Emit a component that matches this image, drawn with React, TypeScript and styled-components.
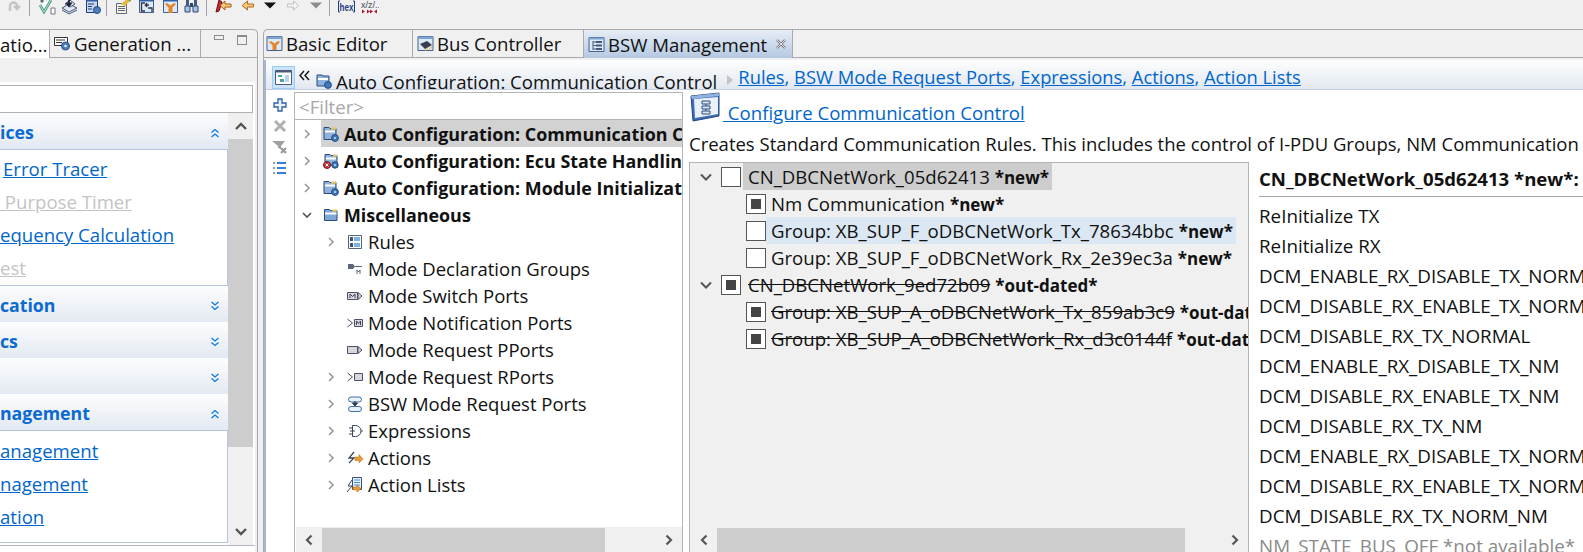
import React from 'react'
import styled, { createGlobalStyle } from 'styled-components'

const GlobalStyle = createGlobalStyle`
  html, body { margin: 0; padding: 0; background: #f0f0f0; }
  * { box-sizing: border-box; }
`

const Page = styled.div`
  width: 1583px;
  height: 552px;
  overflow: hidden;
  display: flex;
  flex-direction: column;
  background: #f0f0f0;
  font-family: 'Open Sans', 'Noto Sans', sans-serif;
  font-size: 18.6px;
  color: #111;
`

/* ---------- toolbar ---------- */
const Toolbar = styled.div`
  height: 29px;
  flex: none;
  display: flex;
  align-items: flex-start;
  overflow: hidden;
`
const ToolIcon = styled.svg<{ $ml?: number }>`
  flex: none;
  margin-top: -2px;
  margin-left: ${({ $ml }) => $ml ?? 6}px;
`
const ToolSep = styled.div<{ $ml: number }>`
  width: 1px;
  height: 16px;
  flex: none;
  margin-left: ${({ $ml }) => $ml}px;
  background: #a0a0a0;
`
const HexText = styled.text`
  font-family: 'Liberation Sans', sans-serif;
  font-size: 11px;
  font-weight: 700;
  fill: #1f3f86;
`
const XzText = styled.text`
  font-family: 'Liberation Sans', sans-serif;
  font-size: 9px;
  fill: #445;
`

/* ---------- panes ---------- */
const Work = styled.div`
  flex: 1;
  display: flex;
  min-height: 0;
`
const LeftPane = styled.div`
  width: 258px;
  flex: none;
  display: flex;
  flex-direction: column;
  border-top: 1px solid #a9a9a9;
  border-right: 1px solid #a9a9a9;
  border-top-right-radius: 5px;
`
const RightPane = styled.div`
  flex: 1;
  margin-left: 5px;
  min-width: 0;
  display: flex;
  flex-direction: column;
  border-top: 1px solid #a9a9a9;
  border-left: 1px solid #a9a9a9;
  border-top-left-radius: 5px;
`
const TabBar = styled.div`
  height: 28px;
  flex: none;
  display: flex;
  border-bottom: 1px solid #a9a9a9;
`
const Tab = styled.div<{ $w: number; $pad?: number; $active?: boolean; $selected?: boolean }>`
  width: ${({ $w }) => $w}px;
  flex: none;
  display: flex;
  align-items: center;
  gap: 3px;
  padding-left: ${({ $pad }) => $pad ?? 4}px;
  height: ${({ $active }) => ($active ? 28 : 27)}px;
  white-space: nowrap;
  overflow: hidden;
  border-right: 1px solid #a9a9a9;
  background: ${({ $active, $selected }) =>
    $selected ? 'linear-gradient(#e6edf6, #b4c9e2)' : $active ? '#fff' : 'transparent'};
`
const TabSpacer = styled.div`
  flex: 1;
`
const PaneButtons = styled.div`
  width: 56px;
  flex: none;
  display: flex;
  align-items: flex-start;
  gap: 13px;
  padding: 5px 0 0 13px;
`
const MinBtn = styled.div`
  width: 10px;
  height: 5px;
  border: 1px solid #8c8c8c;
`
const MaxBtn = styled.div`
  width: 10px;
  height: 10px;
  border: 1px solid #8c8c8c;
  border-top-width: 2px;
`
const CloseMark = styled.svg`
  flex: none;
  margin-left: 5px;
`

/* ---------- left pane ---------- */
const LeftGap = styled.div`
  height: 24px;
  flex: none;
`
const LeftBody = styled.div`
  flex: 1;
  min-height: 0;
  background: #fff;
  margin-right: 2px;
  padding: 3px 0 0;
  display: flex;
  flex-direction: column;
`
const SearchBox = styled.div`
  height: 28px;
  flex: none;
  margin-right: 2px;
  border: 1px solid #b0b0b0;
  border-left: none;
  background: #fff;
`
const LeftColumns = styled.div`
  flex: 1;
  min-height: 0;
  display: flex;
  margin-right: 2px;
`
const Sections = styled.div`
  flex: 1;
  min-width: 0;
  overflow: hidden;
`
const SectionHead = styled.div`
  height: 36px;
  display: flex;
  align-items: center;
  justify-content: space-between;
  padding: 3px 0 0 0;
  background: linear-gradient(#fcfdfe, #e3e9f2);
  color: #0a6ad0;
  font-size: 17.7px;
  font-weight: 700;
  line-height: 1;
`
const Fold = styled.svg`
  margin-right: 8px;
  flex: none;
`
const SectionBody = styled.div<{ $h: number; $pt: number }>`
  height: ${({ $h }) => $h}px;
  border: 1px solid #b7c5da;
  border-left: none;
  background: #fff;
  padding-top: ${({ $pt }) => $pt}px;
`
const SideLink = styled.div<{ $off?: boolean; $ml?: number }>`
  height: 33px;
  padding-left: ${({ $ml }) => $ml ?? 0}px;
  line-height: 33px;
  white-space: pre;
  color: ${({ $off }) => ($off ? '#c4c4c4' : '#0066cc')};
  text-decoration: underline;
`
const VScroll = styled.div`
  width: 25px;
  flex: none;
  display: flex;
  flex-direction: column;
  background: #f0f0f0;
`
const ScrollEnd = styled.div<{ $h: number }>`
  height: ${({ $h }) => $h}px;
  flex: none;
  display: flex;
  align-items: center;
  justify-content: center;
`
const VThumb = styled.div<{ $h: number }>`
  height: ${({ $h }) => $h}px;
  flex: none;
  background: #cdcdcd;
`
const VFill = styled.div`
  flex: 1;
`
const LeftFoot = styled.div`
  height: 7px;
  flex: none;
  border-top: 1px solid #b0b8c4;
`

/* ---------- editor ---------- */
const Editor = styled.div`
  flex: 1;
  min-height: 0;
  margin-top: 2px;
  display: flex;
  flex-direction: column;
  border-left: 2px solid #a3b7d3;
  background: #fff;
`
const FormHead = styled.div`
  height: 30px;
  flex: none;
  display: flex;
  align-items: flex-start;
  overflow: hidden;
  white-space: nowrap;
  border-bottom: 1px solid #c3cfe0;
  background: linear-gradient(#fdfefe, #e2e8f1);
`
const HeadButton = styled.div`
  width: 23px;
  height: 23px;
  flex: none;
  margin: 6px 0 0 6px;
  display: flex;
  align-items: center;
  justify-content: center;
  background: #cbe3f9;
  border: 1px solid #9ccbf3;
`
const HeadBack = styled.svg`
  flex: none;
  margin: 10px 0 0 4px;
`
const HeadIcon = styled.svg`
  flex: none;
  margin: 13px 0 0 6px;
`
const HeadTitle = styled.div`
  margin: 8px 0 0 4px;
  line-height: 28px;
`
const HeadArrow = styled.svg`
  flex: none;
  margin: 15px 0 0 10px;
`
const HeadLinks = styled.div`
  margin: 5px 0 0 5px;
  font-size: 18.35px;
  line-height: 24px;
  color: #0066cc;
`
const HeadLink = styled.span`
  text-decoration: underline;
`
const EditorBody = styled.div`
  flex: 1;
  min-height: 0;
  display: flex;
  padding-top: 2px;
`
const ActionRail = styled.div`
  width: 28px;
  flex: none;
  display: flex;
  flex-direction: column;
  align-items: center;
  gap: 7px;
  padding-top: 6px;
`
const TreePane = styled.div`
  width: 389px;
  flex: none;
  display: flex;
  flex-direction: column;
  border: 1px solid #b4b4b4;
  border-bottom: none;
`
const FilterRow = styled.div`
  height: 27px;
  flex: none;
  padding-left: 4px;
  line-height: 28px;
  color: #a8a8a8;
  border-bottom: 1px solid #b4b4b4;
`
const TreeList = styled.div`
  flex: 1;
  min-height: 0;
  overflow: hidden;
`
const TreeRow = styled.div<{ $level: number }>`
  height: 27px;
  display: flex;
  align-items: center;
  white-space: nowrap;
  padding-left: ${({ $level }) => ($level ? 29 : 5)}px;
`
const Twistie = styled.svg`
  width: 14px;
  height: 14px;
  flex: none;
`
const TwistieGap = styled.div`
  width: 14px;
  height: 14px;
  flex: none;
`
const RowBody = styled.div<{ $level: number; $selected?: boolean }>`
  flex: 1;
  min-width: 0;
  height: 27px;
  display: flex;
  align-items: center;
  gap: 5px;
  overflow: hidden;
  margin-left: 7px;
  padding-left: 2px;
  font-size: ${({ $level }) => ($level ? 18.5 : 17.9)}px;
  font-weight: ${({ $level }) => ($level ? 400 : 700)};
  background: ${({ $selected }) => ($selected ? '#d2d2d2' : 'transparent')};
`
const HScroll = styled.div`
  height: 25px;
  flex: none;
  display: flex;
  align-items: center;
  margin-left: 1px;
  background: #f0f0f0;
`
const HEnd = styled.div`
  width: 26px;
  flex: none;
  display: flex;
  justify-content: center;
`
const HThumb = styled.div<{ $w: number }>`
  width: ${({ $w }) => $w}px;
  height: 24px;
  flex: none;
  background: #cdcdcd;
`
const HFill = styled.div`
  flex: 1;
`

const Details = styled.div`
  flex: 1;
  min-width: 0;
  display: flex;
  flex-direction: column;
  overflow: hidden;
  padding: 0 0 0 6px;
`
const ConfigHead = styled.div`
  height: 30px;
  flex: none;
  display: flex;
  align-items: flex-start;
  gap: 2px;
`
const ConfigLink = styled.div`
  margin-top: 8px;
  line-height: 26px;
  color: #0066cc;
  text-decoration: underline;
  white-space: pre;
`
const Description = styled.div`
  height: 40px;
  flex: none;
  padding-top: 9px;
  font-size: 18.5px;
  line-height: 26px;
  white-space: nowrap;
`
const Split = styled.div`
  flex: 1;
  min-height: 0;
  display: flex;
`
const CheckPane = styled.div`
  width: 560px;
  flex: none;
  display: flex;
  flex-direction: column;
  background: #f0f0f0;
  border: 1px solid #b4b4b4;
  border-bottom: none;
`
const CheckList = styled.div`
  flex: 1;
  min-height: 0;
  overflow: hidden;
`
const CheckRow = styled.div<{ $level: number }>`
  height: 27px;
  display: flex;
  align-items: center;
  white-space: nowrap;
  padding-left: ${({ $level }) => ($level ? 56 : 9)}px;
`
const CheckTwistie = styled(Twistie)`
  margin-right: 8px;
`
const CheckBox = styled.div<{ $on?: boolean }>`
  width: 20px;
  height: 20px;
  flex: none;
  border: 1px solid #555;
  background: #fff;
  display: flex;
  align-items: center;
  justify-content: center;
  &::after {
    content: '';
    display: ${({ $on }) => ($on ? 'block' : 'none')};
    width: 10px;
    height: 10px;
    background: #444;
  }
`
const CheckLabel = styled.div<{ $level: number; $tint?: 'grey' | 'blue' }>`
  height: 27px;
  min-width: 0;
  overflow: hidden;
  margin-left: ${({ $level }) => ($level ? 0 : 2)}px;
  line-height: 27px;
  padding: 0 3px 0 5px;
  background: ${({ $tint }) => ($tint === 'grey' ? '#cdcdcd' : $tint === 'blue' ? '#dbe7f3' : 'transparent')};
`
const Struck = styled.span<{ $gone?: boolean }>`
  text-decoration: ${({ $gone }) => ($gone ? 'line-through' : 'none')};
`
const Bold = styled.span`
  font-size: 17px;
  font-weight: 700;
`
const ModePane = styled.div`
  flex: 1;
  min-width: 0;
  padding-left: 10px;
  white-space: nowrap;
  overflow: hidden;
`
const ModeTitle = styled.div`
  height: 35px;
  margin-bottom: 4px;
  line-height: 34px;
  font-weight: 700;
  border-bottom: 1px solid #a9a9a9;
`
const ModeRow = styled.div<{ $off?: boolean }>`
  height: 30px;
  font-size: 18.8px;
  line-height: 30px;
  color: ${({ $off }) => ($off ? '#8a8a8a' : '#111')};
`

/* ---------- icons ---------- */
const FolderGear = () => (
  <svg width="16" height="16" viewBox="0 0 16 16" style={{ flex: 'none' }}>
    <path d="M1 1.500h5l1 1h6v11H1z" fill="#8fb2dc" stroke="#2d4a7c" />
    <path d="M2 4.500h10v2H2z" fill="#fff" />
    <path d="M8 1.500h5v2H8z" fill="#e8c35a" />
    <circle cx="12" cy="12" r="3.400" fill="#3f78b8" stroke="#204a80" />
    <circle cx="12" cy="12" r="1" fill="#cfe0f2" />
  </svg>
)
const FolderError = () => (
  <svg width="16" height="16" viewBox="0 0 16 16" style={{ flex: 'none' }}>
    <path d="M2 1.500h5l1 1h6v10H2z" fill="#8fb2dc" stroke="#2d4a7c" />
    <path d="M3 4.500h10v2H3z" fill="#fff" />
    <path d="M10 1.500h4v2h-4z" fill="#e8c35a" />
    <circle cx="4" cy="12" r="3.500" fill="#c8323c" stroke="#7c1a22" />
    <path d="M2.600 10.600l2.800 2.800M5.400 10.600l-2.800 2.800" stroke="#fff" />
    <circle cx="12" cy="12" r="3.200" fill="#3f78b8" stroke="#204a80" />
    <circle cx="12" cy="12" r="1" fill="#cfe0f2" />
  </svg>
)
const Folder = () => (
  <svg width="16" height="16" viewBox="0 0 16 16" style={{ flex: 'none' }}>
    <path d="M1.500 2.500h5l1 1h6.500v10h-12.500z" fill="#7ea6d6" stroke="#2d4a7c" />
    <path d="M2 5.500h11.500v2H2z" fill="#fff" />
    <path d="M9 2.500h5v2H9z" fill="#e8c35a" />
  </svg>
)
const RulesIcon = () => (
  <svg width="16" height="16" viewBox="0 0 16 16" style={{ flex: 'none' }}>
    <path d="M1.500 1.500h13v13h-13z" fill="#fff" stroke="#54627c" />
    <path d="M7 3h6v4H7zM7 9h6v4H7z" fill="#7db3e2" />
    <path d="M3 3h3v4H3zM3 9h3v4H3z" fill="#44536e" />
  </svg>
)
const ModeGroupIcon = () => (
  <svg width="16" height="16" viewBox="0 0 16 16" style={{ flex: 'none' }}>
    <path d="M1 3h5l2 2.500L6 8H1z" fill="#5c6579" />
    <path d="M8 5.500h7" stroke="#5c6579" />
    <path d="M10 13V9l1.500 2L13 9v4" fill="none" stroke="#5c6579" />
  </svg>
)
const SwitchPortIcon = () => (
  <svg width="16" height="16" viewBox="0 0 16 16" style={{ flex: 'none' }}>
    <path d="M.5 4.500h10v7H.5z" fill="#d8d8dc" stroke="#4a5268" />
    <path d="M3 10V6l2.500 2.500L8 6v4" fill="none" stroke="#3c4458" />
    <path d="M11 4.500l4 3.500-4 3.500z" fill="#d8d8dc" stroke="#4a5268" />
  </svg>
)
const NotifyPortIcon = () => (
  <svg width="16" height="16" viewBox="0 0 16 16" style={{ flex: 'none' }}>
    <path d="M.5 4l5 4-5 4" fill="none" stroke="#4a5268" />
    <path d="M7.500 4.500h8v7h-8z" fill="#d8d8dc" stroke="#4a5268" />
    <path d="M9.500 10V6l2 2.500 2-2.500v4" fill="none" stroke="#3c4458" />
  </svg>
)
const PPortIcon = () => (
  <svg width="16" height="16" viewBox="0 0 16 16" style={{ flex: 'none' }}>
    <path d="M.5 4.500h10v7H.5z" fill="#d8d8dc" stroke="#4a5268" />
    <path d="M11 4.500l4 3.500-4 3.500z" fill="#d8d8dc" stroke="#4a5268" />
  </svg>
)
const RPortIcon = () => (
  <svg width="16" height="16" viewBox="0 0 16 16" style={{ flex: 'none' }}>
    <path d="M.5 4l5 4-5 4" fill="none" stroke="#4a5268" />
    <path d="M7.500 4.500h8v7h-8z" fill="#d8d8dc" stroke="#4a5268" />
  </svg>
)
const BswPortIcon = () => (
  <svg width="16" height="16" viewBox="0 0 16 16" style={{ flex: 'none' }}>
    <rect x="1.500" y="1" width="13" height="5" rx="2.500" fill="#e8f0fa" stroke="#3f6fa8" />
    <rect x="1.500" y="10.500" width="13" height="5" rx="2.500" fill="#e8f0fa" stroke="#3f6fa8" />
    <path d="M8 5v2M5.500 7h5L8 10z" fill="#2d3a55" stroke="#2d3a55" />
  </svg>
)
const ExpressionIcon = () => (
  <svg width="16" height="16" viewBox="0 0 16 16" style={{ flex: 'none' }}>
    <path d="M5.500 2.500h3a5.500 5.500 0 0 1 0 11h-3z" fill="#fff" stroke="#3a4560" />
    <path d="M2 5h3.500M2 11h3.500M14 8h2M3 8h5" stroke="#3a4560" />
  </svg>
)
const ActionIcon = () => (
  <svg width="16" height="16" viewBox="0 0 16 16" style={{ flex: 'none' }}>
    <path d="M7 2L2 8h5l-5 5" fill="none" stroke="#3a4560" strokeWidth="1.300" />
    <path d="M8 7h4V4.500L16 9l-4 4v-2.500H8z" fill="#ef9a2c" stroke="#a8641a" strokeWidth=".5" />
  </svg>
)
const ActionListIcon = () => (
  <svg width="16" height="18" viewBox="0 0 16 18" style={{ flex: 'none' }}>
    <path d="M5.500 1.500h9v12h-9z" fill="#eaf2fb" stroke="#3a4f78" />
    <path d="M7 4h6M7 6.500h6M7 9h6" stroke="#3f8fdc" />
    <path d="M5 4L1 10h4l-5 6" fill="none" stroke="#3a4560" />
    <path d="M6 11h4V9l4 3.500-4 3.500v-2H6z" fill="#ef9a2c" stroke="#a8641a" strokeWidth=".5" />
  </svg>
)
const DocTabIcon = () => (
  <svg width="17" height="17" viewBox="0 0 17 17" style={{ flex: 'none' }}>
    <path d="M1 1.500h15v14H1z" fill="#dce9f7" stroke="#44618e" />
    <path d="M1 1.500h15v2.500H1z" fill="#7fa4d4" />
    <path d="M3 7l2-1 3.500 2.500L12 6l2 1-3.500 3.500V15h-4v-4.500z" fill="#e6842a" />
  </svg>
)
const ChipIcon = () => (
  <svg width="17" height="17" viewBox="0 0 17 17" style={{ flex: 'none' }}>
    <path d="M1 1.500h15v14H1z" fill="#dce9f7" stroke="#44618e" />
    <path d="M1 1.500h15v2.500H1z" fill="#7fa4d4" />
    <path d="M3 9l7-3 5 4-7 4z" fill="#3a3f4e" />
    <path d="M8 15h1M10 14.500h1M12 13.500h1M14 12.500h1" stroke="#e8b82c" strokeWidth="1.500" />
  </svg>
)
const BswIcon = () => (
  <svg width="17" height="17" viewBox="0 0 17 17" style={{ flex: 'none' }}>
    <path d="M1 1.500h15v14H1z" fill="#dce9f7" stroke="#44618e" />
    <path d="M1 1.500h15v2H1z" fill="#7fa4d4" />
    <path d="M8 5h6v2H8zM8 8.500h6v2H8zM8 12h6v2H8z" fill="#46597e" />
    <path d="M5 5v9M5 6h3M5 9.500h3M5 13h3" fill="none" stroke="#46597e" />
  </svg>
)
const GenIcon = () => (
  <svg width="17" height="15" viewBox="0 0 17 15" style={{ flex: 'none' }}>
    <path d="M.5 1.500h13v8H.5z" fill="#fff" stroke="#333" />
    <path d="M2 4h9M2 6.500h6" stroke="#333" />
    <circle cx="11.500" cy="10" r="4" fill="#4d7fbe" stroke="#264d84" />
    <circle cx="11.500" cy="10" r="1.300" fill="#dfeaf6" />
  </svg>
)
const LeftChevron = () => (
  <svg width="10" height="12" viewBox="0 0 10 12">
    <path d="M7.500 1.500L3 6l4.500 4.500" fill="none" stroke="#555" strokeWidth="2.200" />
  </svg>
)
const RightChevron = () => (
  <svg width="10" height="12" viewBox="0 0 10 12">
    <path d="M2.500 1.500L7 6l-4.500 4.500" fill="none" stroke="#555" strokeWidth="2.200" />
  </svg>
)
const UpChevron = () => (
  <svg width="14" height="10" viewBox="0 0 14 10">
    <path d="M2 8l5-5 5 5" fill="none" stroke="#555" strokeWidth="2.400" />
  </svg>
)
const DownChevron = () => (
  <svg width="14" height="10" viewBox="0 0 14 10">
    <path d="M2 2l5 5 5-5" fill="none" stroke="#555" strokeWidth="2.400" />
  </svg>
)
const FoldDown = () => (
  <Fold width="10" height="10" viewBox="0 0 10 10">
    <path d="M1.500 1l3.500 3 3.500-3M1.500 5.500l3.500 3 3.500-3" fill="none" stroke="#0a78e0" strokeWidth="1.300" />
  </Fold>
)
const FoldUp = () => (
  <Fold width="10" height="10" viewBox="0 0 10 10">
    <path d="M1.500 4.500l3.500-3 3.500 3M1.500 9l3.500-3 3.500 3" fill="none" stroke="#0a78e0" strokeWidth="1.300" />
  </Fold>
)
const Closed = () => (
  <Twistie viewBox="0 0 14 14">
    <path d="M5 3l4 4-4 4" fill="none" stroke="#9b9b9b" strokeWidth="1.700" />
  </Twistie>
)
const Open = () => (
  <Twistie viewBox="0 0 14 14">
    <path d="M3 5l4 4 4-4" fill="none" stroke="#555" strokeWidth="1.700" />
  </Twistie>
)
const CheckTwistieOpen = () => (
  <CheckTwistie viewBox="0 0 14 14">
    <path d="M2 4.500l5 5 5-5" fill="none" stroke="#555" strokeWidth="2" />
  </CheckTwistie>
)

/* ---------- data ---------- */
const treeRows = [
  { level: 0, label: 'Auto Configuration: Communication Control', icon: <FolderGear />, state: 'closed', selected: true },
  { level: 0, label: 'Auto Configuration: Ecu State Handling', icon: <FolderError />, state: 'closed' },
  { level: 0, label: 'Auto Configuration: Module Initialization', icon: <FolderGear />, state: 'closed' },
  { level: 0, label: 'Miscellaneous', icon: <Folder />, state: 'open' },
  { level: 1, label: 'Rules', icon: <RulesIcon />, state: 'closed' },
  { level: 1, label: 'Mode Declaration Groups', icon: <ModeGroupIcon /> },
  { level: 1, label: 'Mode Switch Ports', icon: <SwitchPortIcon /> },
  { level: 1, label: 'Mode Notification Ports', icon: <NotifyPortIcon /> },
  { level: 1, label: 'Mode Request PPorts', icon: <PPortIcon /> },
  { level: 1, label: 'Mode Request RPorts', icon: <RPortIcon />, state: 'closed' },
  { level: 1, label: 'BSW Mode Request Ports', icon: <BswPortIcon />, state: 'closed' },
  { level: 1, label: 'Expressions', icon: <ExpressionIcon />, state: 'closed' },
  { level: 1, label: 'Actions', icon: <ActionIcon />, state: 'closed' },
  { level: 1, label: 'Action Lists', icon: <ActionListIcon />, state: 'closed' },
]

const checkRows = [
  { level: 0, name: 'CN_DBCNetWork_05d62413', tag: '*new*', on: false, tint: 'grey' as const },
  { level: 1, name: 'Nm Communication', tag: '*new*', on: true },
  { level: 1, name: 'Group: XB_SUP_F_oDBCNetWork_Tx_78634bbc', tag: '*new*', on: false, tint: 'blue' as const },
  { level: 1, name: 'Group: XB_SUP_F_oDBCNetWork_Rx_2e39ec3a', tag: '*new*', on: false },
  { level: 0, name: 'CN_DBCNetWork_9ed72b09', tag: '*out-dated*', on: true, gone: true },
  { level: 1, name: 'Group: XB_SUP_A_oDBCNetWork_Tx_859ab3c9', tag: '*out-dated*', on: true, gone: true },
  { level: 1, name: 'Group: XB_SUP_A_oDBCNetWork_Rx_d3c0144f', tag: '*out-dated*', on: true, gone: true },
]

const modes = [
  'ReInitialize TX',
  'ReInitialize RX',
  'DCM_ENABLE_RX_DISABLE_TX_NORM',
  'DCM_DISABLE_RX_ENABLE_TX_NORM',
  'DCM_DISABLE_RX_TX_NORMAL',
  'DCM_ENABLE_RX_DISABLE_TX_NM',
  'DCM_DISABLE_RX_ENABLE_TX_NM',
  'DCM_DISABLE_RX_TX_NM',
  'DCM_ENABLE_RX_DISABLE_TX_NORM',
  'DCM_DISABLE_RX_ENABLE_TX_NORM',
  'DCM_DISABLE_RX_TX_NORM_NM',
]

const headLinks = ['Rules', 'BSW Mode Request Ports', 'Expressions', 'Actions', 'Action Lists']

function ToolbarStrip() {
  return (
    <Toolbar>
      <ToolIcon $ml={8} width="13" height="17" viewBox="0 0 13 17">
        <path d="M2 13V8a3.500 3.500 0 0 1 7 0v2M6 8l3 3 3-3" fill="none" stroke="#c4c4c4" strokeWidth="2.400" />
      </ToolIcon>
      <ToolSep $ml={8} />
      <ToolIcon $ml={8} width="18" height="17" viewBox="0 0 18 17">
        <path d="M2 7l4 7 7-12" fill="#fff" stroke="#3f9a78" strokeWidth="2.600" />
        <path d="M2 7l4 7 7-12" fill="none" stroke="#dff2ea" strokeWidth=".8" />
        <path d="M13 10h4v6h-4z" fill="#fff" stroke="#778" />
        <path d="M2 3l2-2 2 2-2 2z" fill="#667" />
      </ToolIcon>
      <ToolIcon $ml={5} width="17" height="17" viewBox="0 0 17 17">
        <path d="M1 10l7-4 8 4-8 4zM1 12l7 4 8-4" fill="#dfe6f0" stroke="#46597e" />
        <path d="M4 6l5-4 5 4-5 3z" fill="#dfe6f0" stroke="#46597e" />
        <path d="M8 0v7M5.500 4.500L8 8l2.500-3.500" fill="none" stroke="#223" strokeWidth="1.800" />
      </ToolIcon>
      <ToolIcon $ml={7} width="17" height="17" viewBox="0 0 17 17">
        <path d="M1.500 1.500h11v13h-11z" fill="#c8d8ec" stroke="#1f3f78" />
        <path d="M1.500 1.500h11v2h-11z" fill="#2f5fa8" />
        <path d="M3 6h6M3 8.500h4M3 11h4" stroke="#1f3f78" />
        <circle cx="12" cy="12" r="3.500" fill="#4d7fbe" stroke="#264d84" />
      </ToolIcon>
      <ToolSep $ml={4} />
      <ToolIcon $ml={8} width="17" height="17" viewBox="0 0 17 17">
        <path d="M1.500 5.500h10v10h-10z" fill="#f6f2e0" stroke="#5d6a84" />
        <path d="M3 8.500h7M3 10.500h7M3 12.500h7" stroke="#5d6a84" />
        <path d="M6 6l6-5 4 1-6 6z" fill="#e6b840" />
        <path d="M13 1l3 1-1 2z" fill="#3f9a58" />
      </ToolIcon>
      <ToolIcon $ml={6} width="17" height="17" viewBox="0 0 17 17">
        <path d="M1.500 1.500h14v13h-14z" fill="#dce9f7" stroke="#3f5f90" />
        <path d="M1.500 1.500h14v2h-14z" fill="#2f5fa8" />
        <path d="M7 5H3.500v8H7M11 7H7.500L9 5M7.500 7L9 9M10 10h4v4" fill="none" stroke="#334" strokeWidth="1.300" />
      </ToolIcon>
      <ToolIcon $ml={7} width="17" height="17" viewBox="0 0 17 17">
        <path d="M1.500 1.500h14v13h-14z" fill="#dce9f7" stroke="#3f5f90" />
        <path d="M1.500 1.500h14v2h-14z" fill="#2f5fa8" />
        <path d="M3 6l2-1 3.500 2.500L12 5l2 1-3.500 3.500V15h-4V9.500z" fill="#e6842a" />
      </ToolIcon>
      <ToolIcon $ml={5} width="15" height="17" viewBox="0 0 15 17">
        <path d="M1 8h5v6H1zM9 8h5v6H9z" fill="#a8c4e6" stroke="#2f4770" />
        <path d="M2 1h3v7H2zM10 1h3v7h-3z" fill="#46597e" />
        <path d="M6 5h3v4H6z" fill="#2f4770" />
      </ToolIcon>
      <ToolSep $ml={7} />
      <ToolIcon $ml={8} width="17" height="17" viewBox="0 0 17 17">
        <path d="M1 14l3-12 3 2-3 9z" fill="#c22a3a" stroke="#611" />
        <path d="M16 6h-6V3L5 7.500 10 12V9h6z" fill="#f8c87c" stroke="#a85c10" />
      </ToolIcon>
      <ToolIcon $ml={9} width="13" height="17" viewBox="0 0 13 17">
        <path d="M12.500 6H6.500V3L1 7.500 6.500 12V9h6z" fill="#f8c87c" stroke="#b8681c" />
      </ToolIcon>
      <ToolIcon $ml={10} width="12" height="17" viewBox="0 0 12 17">
        <path d="M0 4.500h12L6 10.500z" fill="#111" />
      </ToolIcon>
      <ToolIcon $ml={11} width="12" height="17" viewBox="0 0 12 17">
        <path d="M.5 6h6V3L11.500 7.500 6.500 12V9h-6z" fill="#f4f4f4" stroke="#c0c0c0" />
      </ToolIcon>
      <ToolIcon $ml={11} width="12" height="17" viewBox="0 0 12 17">
        <path d="M0 4.500h12L6 10.500z" fill="#8c8c8c" />
      </ToolIcon>
      <ToolSep $ml={7} />
      <ToolIcon $ml={8} width="17" height="17" viewBox="0 0 17 17">
        <path d="M2 3H.5v11H2M15 3h1.500v11H15" fill="none" stroke="#2a3a80" />
        <HexText x="1.500" y="12.500" textLength="14" lengthAdjust="spacingAndGlyphs">hex</HexText>
      </ToolIcon>
      <ToolIcon $ml={6} width="18" height="17" viewBox="0 0 18 17">
        <XzText x="0" y="10">x/z/..</XzText>
        <path d="M1 11.500l3 2-3 2zM6 11.500l3 2-3 2zM9 11.500l3 2-3 2zM16 11.500l-3 2 3 2z" fill="#a81c3a" />
      </ToolIcon>
    </Toolbar>
  )
}

function LeftSide() {
  return (
    <LeftPane>
      <TabBar>
        <Tab $w={50} $pad={0} $active>atio...</Tab>
        <Tab $w={151}>
          <GenIcon />
          Generation ...
        </Tab>
        <TabSpacer />
        <PaneButtons>
          <MinBtn />
          <MaxBtn />
        </PaneButtons>
      </TabBar>
      <LeftGap />
      <LeftBody>
        <SearchBox />
        <LeftColumns>
          <Sections>
            <SectionHead>
              <span>ices</span>
              <FoldUp />
            </SectionHead>
            <SectionBody $h={137} $pt={2}>
              <SideLink $ml={3}>Error Tracer</SideLink>
              <SideLink $off>{'\u00a0Purpose Timer'}</SideLink>
              <SideLink>equency Calculation</SideLink>
              <SideLink $off>est</SideLink>
            </SectionBody>
            <SectionHead>
              <span>cation</span>
              <FoldDown />
            </SectionHead>
            <SectionHead>
              <span>cs</span>
              <FoldDown />
            </SectionHead>
            <SectionHead>
              <span />
              <FoldDown />
            </SectionHead>
            <SectionHead>
              <span>nagement</span>
              <FoldUp />
            </SectionHead>
            <SectionBody $h={113} $pt={3}>
              <SideLink>anagement</SideLink>
              <SideLink>nagement</SideLink>
              <SideLink>ation</SideLink>
            </SectionBody>
          </Sections>
          <VScroll>
            <ScrollEnd $h={26}>
              <UpChevron />
            </ScrollEnd>
            <VThumb $h={308} />
            <VFill />
            <ScrollEnd $h={26}>
              <DownChevron />
            </ScrollEnd>
          </VScroll>
        </LeftColumns>
        <LeftFoot />
      </LeftBody>
    </LeftPane>
  )
}

function RightSide() {
  return (
    <RightPane>
      <TabBar>
        <Tab $w={149} $pad={2}>
          <DocTabIcon />
          Basic Editor
        </Tab>
        <Tab $w={171}>
          <ChipIcon />
          Bus Controller
        </Tab>
        <Tab $w={209} $active $selected>
          <BswIcon />
          BSW Management
          <CloseMark width="12" height="12" viewBox="0 0 12 12">
            <path d="M2 2l8 8M10 2l-8 8" stroke="#777" strokeWidth="2.400" />
            <path d="M2 2l8 8M10 2l-8 8" stroke="#fff" strokeWidth=".8" />
          </CloseMark>
        </Tab>
      </TabBar>
      <Editor>
        <FormHead>
          <HeadButton>
            <svg width="17" height="15" viewBox="0 0 17 15">
              <path d="M.5 .5h16v14H.5z" fill="#fff" stroke="#4a5a78" />
              <path d="M.5 .5h16v2H.5z" fill="#4a5a78" />
              <path d="M3 5h4v2H3zM5 9h4v3H5z" fill="#4aa5a0" />
              <path d="M10 5h4v7h-4z" fill="#b6d4ec" />
            </svg>
          </HeadButton>
          <HeadBack width="11" height="11" viewBox="0 0 11 11">
            <path d="M5 1L1 5.500 5 10M10 1L6 5.500l4 4.500" fill="none" stroke="#111" strokeWidth="1.400" />
          </HeadBack>
          <HeadIcon width="16" height="16" viewBox="0 0 16 16">
            <path d="M1 2h5l1 1h6v10H1z" fill="#8fb2dc" stroke="#2d4a7c" />
            <path d="M2 5h10v2H2z" fill="#fff" />
            <circle cx="12" cy="12" r="3.400" fill="#3f78b8" stroke="#204a80" />
          </HeadIcon>
          <HeadTitle>Auto Configuration: Communication Control</HeadTitle>
          <HeadArrow width="6" height="10" viewBox="0 0 6 10">
            <path d="M0 0l6 5-6 5z" fill="#c4c4c4" />
          </HeadArrow>
          <HeadLinks>
            {headLinks.map((link, i) => (
              <React.Fragment key={link}>
                <HeadLink>{link}</HeadLink>
                {i < headLinks.length - 1 ? ', ' : ''}
              </React.Fragment>
            ))}
          </HeadLinks>
        </FormHead>
        <EditorBody>
          <ActionRail>
            <svg width="14" height="14" viewBox="0 0 14 14">
              <path d="M5 1h4v4h4v4H9v4H5V9H1V5h4z" fill="#e8f0fa" stroke="#2f5fa8" strokeWidth="1.300" />
            </svg>
            <svg width="14" height="14" viewBox="0 0 14 14">
              <path d="M2 2l10 10M12 2L2 12" stroke="#b0b0b0" strokeWidth="3" />
            </svg>
            <svg width="17" height="14" viewBox="0 0 17 14">
              <path d="M0 1h13L9 6v3L6 8V6z" fill="#a0a0a0" />
              <path d="M9 8l5 5M14 8l-5 5" stroke="#9a9a9a" strokeWidth="2.200" />
            </svg>
            <svg width="14" height="14" viewBox="0 0 14 14">
              <path d="M4 2h9M4 7h9M4 12h9" stroke="#2f80d8" strokeWidth="2" />
              <path d="M1 1v2M1 6v2M1 11v2" stroke="#334" />
            </svg>
          </ActionRail>
          <TreePane>
            <FilterRow>&lt;Filter&gt;</FilterRow>
            <TreeList>
              {treeRows.map((row) => (
                <TreeRow key={row.label} $level={row.level}>
                  {row.state === 'closed' ? <Closed /> : row.state === 'open' ? <Open /> : <TwistieGap />}
                  <RowBody $level={row.level} $selected={row.selected}>
                    {row.icon}
                    {row.label}
                  </RowBody>
                </TreeRow>
              ))}
            </TreeList>
            <HScroll>
              <HEnd>
                <LeftChevron />
              </HEnd>
              <HThumb $w={283} />
              <HFill />
              <HEnd>
                <RightChevron />
              </HEnd>
            </HScroll>
          </TreePane>
          <Details>
            <ConfigHead>
              <svg width="32" height="30" viewBox="0 0 32 30" style={{ flex: 'none' }}>
                <path d="M2 4l28-3v23L4 29z" fill="#3f6fb8" stroke="#24457e" />
                <path d="M5 7l24-2v17L6 26z" fill="#e8f0fa" />
                <path d="M2 4l28-3v3L3 7z" fill="#8fb4e0" />
                <path d="M13 9h8v3h-8zM13 14h8v3h-8zM13 19h8v3h-8z" fill="#dce9f7" stroke="#2d4a7c" />
                <path d="M17 12v2M17 17v2" stroke="#2d4a7c" />
              </svg>
              <ConfigLink> Configure Communication Control</ConfigLink>
            </ConfigHead>
            <Description>
              Creates Standard Communication Rules. This includes the control of I-PDU Groups, NM Communication
            </Description>
            <Split>
              <CheckPane>
                <CheckList>
                  {checkRows.map((row) => (
                    <CheckRow key={row.name} $level={row.level}>
                      {row.level === 0 && <CheckTwistieOpen />}
                      <CheckBox $on={row.on} />
                      <CheckLabel $level={row.level} $tint={row.tint}>
                        <Struck $gone={row.gone}>{row.name}</Struck> <Bold>{row.tag}</Bold>
                      </CheckLabel>
                    </CheckRow>
                  ))}
                </CheckList>
                <HScroll>
                  <HEnd>
                    <LeftChevron />
                  </HEnd>
                  <HThumb $w={468} />
                  <HFill />
                  <HEnd>
                    <RightChevron />
                  </HEnd>
                </HScroll>
              </CheckPane>
              <ModePane>
                <ModeTitle>CN_DBCNetWork_05d62413 *new*:</ModeTitle>
                {modes.map((mode, i) => (
                  <ModeRow key={i}>{mode}</ModeRow>
                ))}
                <ModeRow $off>NM_STATE_BUS_OFF *not available*</ModeRow>
              </ModePane>
            </Split>
          </Details>
        </EditorBody>
      </Editor>
    </RightPane>
  )
}

export default function App() {
  return (
    <Page>
      <GlobalStyle />
      <ToolbarStrip />
      <Work>
        <LeftSide />
        <RightSide />
      </Work>
    </Page>
  )
}
